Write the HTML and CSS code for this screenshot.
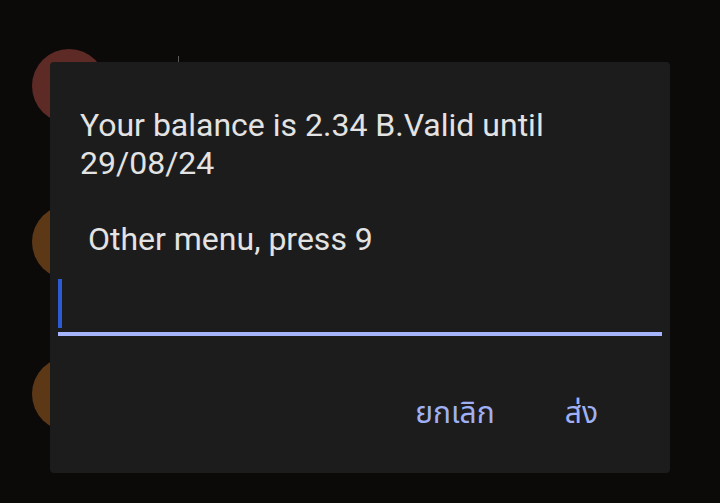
FILE: index.html
```html
<!DOCTYPE html>
<html>
<head>
<meta charset="utf-8">
<link rel="stylesheet" href="styles.css">
</head>
<body>
<div class="screen">
  <div class="bg-list">
    <div class="avatar red"></div>
    <div class="avatar orange"></div>
    <div class="avatar orange"></div>
    <div class="tick"></div>
  </div>
  <div class="dialog">
    <div class="message">Your balance is 2.34 B.Valid until 29/08/24</div>
    <div class="message second">&nbsp;Other menu, press 9</div>
    <div class="field">
      <div class="cursor"></div>
    </div>
    <div class="actions">
      <span class="btn">ยกเลิก</span>
      <span class="btn">ส่ง</span>
    </div>
  </div>
</div>
</body>
</html>
```
FILE: styles.css
```css
html, body {
  margin: 0;
  padding: 0;
  background: #0b0a09;
}
.screen {
  position: relative;
  width: 720px;
  height: 503px;
  overflow: hidden;
  font-family: Roboto, "Noto Sans", "Noto Sans Thai", sans-serif;
}
.bg-list {
  position: absolute;
  inset: 0;
}
.avatar {
  position: absolute;
  left: 32px;
  width: 74px;
  height: 74px;
  border-radius: 50%;
}
.avatar.red { top: 49px; background: #5e2a25; }
.avatar.orange { background: #5c3817; }
.avatar.orange:nth-child(2) { top: 205px; }
.avatar.orange:nth-child(3) { top: 357px; }
.tick {
  position: absolute;
  left: 178px;
  top: 56px;
  width: 1px;
  height: 7px;
  background: #5a5a5a;
}
.dialog {
  position: absolute;
  left: 50px;
  top: 62px;
  width: 620px;
  height: 411px;
  box-sizing: border-box;
  background: #1c1c1c;
  border-radius: 4px;
  padding: 44px 8px 0 8px;
  display: flex;
  flex-direction: column;
}
.message {
  color: #e3e3e3;
  font-size: 32px;
  line-height: 38px;
  padding: 0 40px 0 22px;
}
.message.second {
  margin-top: 38px;
}
.field {
  margin-top: 21px;
  padding-bottom: 4px;
  border-bottom: 4px solid #a6b4fb;
  display: flex;
  align-items: flex-start;
}
.cursor {
  width: 4px;
  height: 49px;
  background: #2c5ad3;
}
.actions {
  display: flex;
  justify-content: flex-end;
  gap: 70px;
  padding-right: 64px;
  margin-top: 57px;
}
.btn {
  color: #9fb0f5;
  font-size: 30px;
  line-height: 40px;
}
```
